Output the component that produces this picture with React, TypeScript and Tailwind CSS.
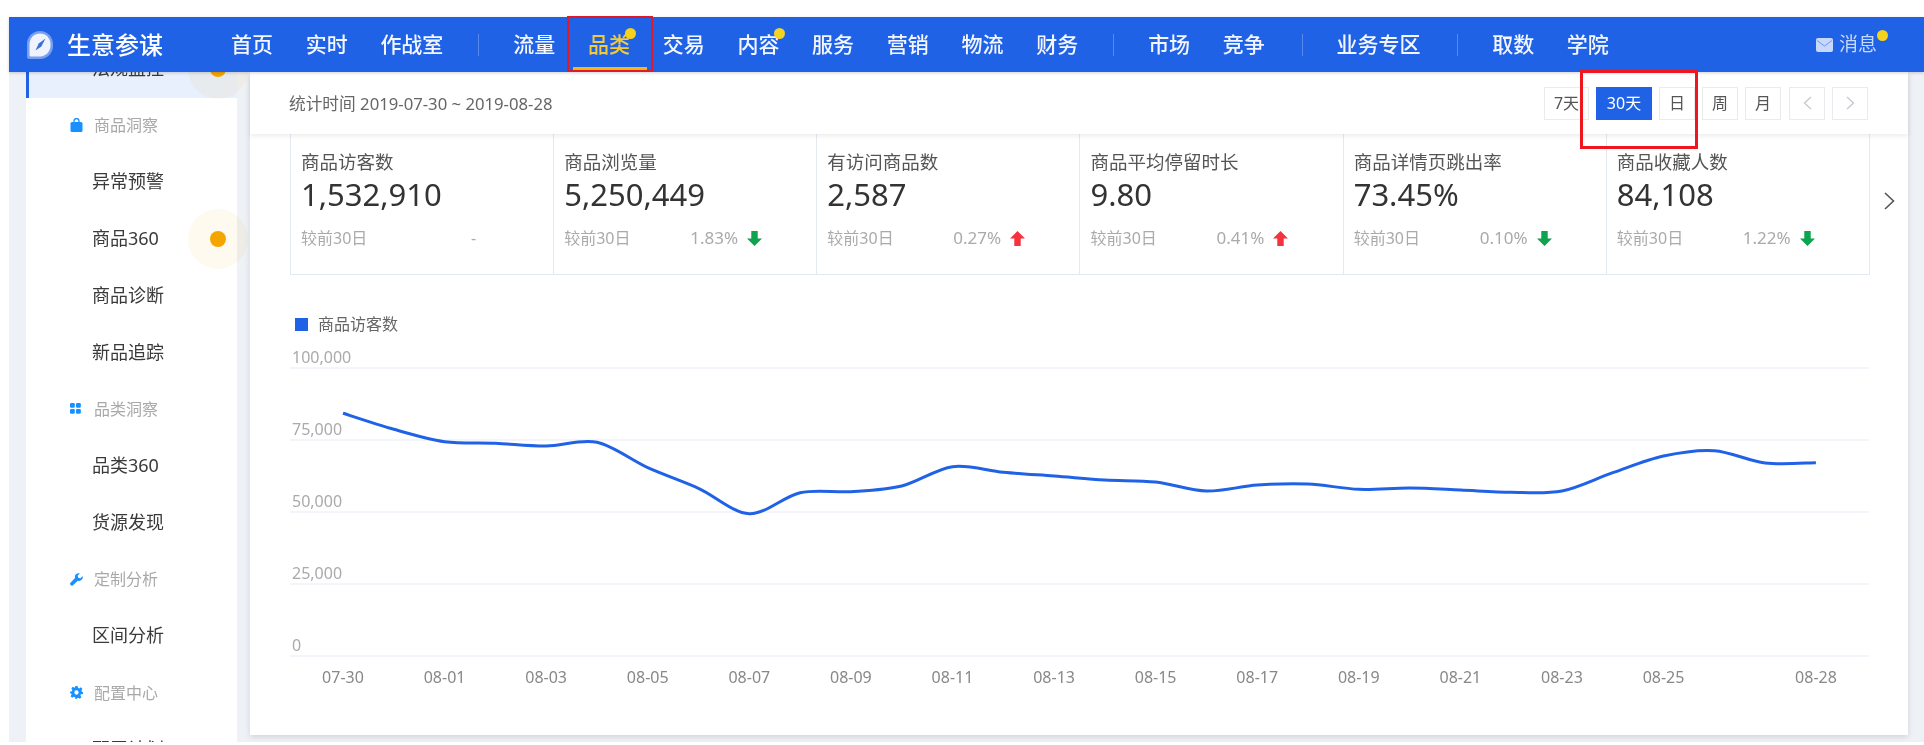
import React from "react";

const FONT = '"Noto Sans","Noto Sans CJK SC",sans-serif';

type NavItem = { t: string; active?: boolean; dot?: boolean } | "sep" | "sepWide";
const NAV: NavItem[] = [
  { t: "首页" }, { t: "实时" }, { t: "作战室" }, "sep",
  { t: "流量" }, { t: "品类", active: true, dot: true }, { t: "交易" }, { t: "内容", dot: true },
  { t: "服务" }, { t: "营销" }, { t: "物流" }, { t: "财务" }, "sep",
  { t: "市场" }, { t: "竞争" }, "sepWide", { t: "业务专区" }, "sepWide", { t: "取数" }, { t: "学院" },
];

function Logo() {
  return (
    <svg width="28" height="30" viewBox="0 0 28 30" className="shrink-0">
      <path d="M14 1C6.800 1 1 6.800 1 14v12.500A2.500 2.500 0 0 0 3.500 29H14c7.200 0 13-5.800 13-13V14C27 6.800 21.200 1 14 1Z" fill="#fff" fillOpacity="0.4" />
      <path d="M14 3.500C8.200 3.500 3.500 8.200 3.500 14v11c0 .8.700 1.500 1.500 1.500h9c5.800 0 10.500-5.200 10.500-11V14C24.500 8.200 19.800 3.500 14 3.500Z" fill="#eef3fd" />
      <path d="M19.500 8.500 15.300 16.500 9.500 20.500 12.700 13.500Z" fill="#3a6fd6" />
    </svg>
  );
}

function Header() {
  return (
    <header className="relative z-30 flex h-[55px] items-center bg-[#2062e6] pl-[17px] shadow-[0_1px_3px_rgba(0,0,0,0.18)]">
      <Logo />
      <span className="ml-[13px] w-[95px] whitespace-nowrap text-[24px] font-medium leading-none text-white">生意参谋</span>
      <nav className="ml-[69px] flex h-full items-center gap-[32.700px]">
        {NAV.map((n, i) =>
          n === "sep" || n === "sepWide" ? (
            <span key={i} className={`h-[22px] w-px bg-white/25 ${n === "sep" ? "ml-[2.300px] mr-[1.300px]" : "ml-[4px] mr-[1.300px]"}`} />
          ) : (
            <span key={i} className={`relative whitespace-nowrap text-[21px] font-medium leading-none ${n.active ? "text-[#f2cb3c]" : "text-[#f3f6fe]"}`}>
              {n.t}
              {n.dot && <span className="absolute -right-[6px] -top-[6px] h-[11px] w-[11px] rounded-full bg-[#f5d21f]" />}
            </span>
          )
        )}
      </nav>
      <div className="relative ml-auto mr-[47px] flex items-center gap-[6px] text-[19px] leading-none text-[#c6d8fb]">
        <svg width="17" height="14" viewBox="0 0 17 14">
          <rect width="17" height="14" rx="2" fill="#c6d8fb" />
          <path d="M1 2.500 8.500 8 16 2.500" fill="none" stroke="#2062e6" strokeWidth="1" opacity="0.55" />
        </svg>
        <span>消息</span>
        <span className="absolute -right-[11px] -top-[5px] h-[11px] w-[11px] rounded-full bg-[#f5d21f]" />
      </div>
      <span className="absolute bottom-[2px] left-[564px] h-[3px] w-[74px] bg-[#f0b90b]" />
      <span className="absolute -top-px bottom-0 left-[558px] w-[86px] border-[2.500px] border-[#e0182a]" />
    </header>
  );
}

function BagIcon() {
  return (
    <svg width="13" height="14" viewBox="0 0 13 14"><path d="M4 4V3a2.500 2.500 0 0 1 5 0v1" fill="none" stroke="#1890ff" strokeWidth="1.300" /><rect x="0.500" y="4" width="12" height="10" rx="1.500" fill="#1890ff" /></svg>
  );
}
function GridIcon() {
  return (
    <svg width="11" height="11" viewBox="0 0 11 11" fill="#1890ff"><rect width="4.800" height="4.800" rx="1.200" /><rect x="6" width="4.800" height="4.800" rx="1.200" /><rect y="6" width="4.800" height="4.800" rx="1.200" /><rect x="6" y="6" width="4.800" height="4.800" rx="1.200" /></svg>
  );
}
function WrenchIcon() {
  return (
    <svg width="13" height="13" viewBox="0 0 13 13" fill="#1890ff"><path d="M12.600 3.200 10.400 5.300 8.200 4.800 7.700 2.600 9.800.400C7.900-.300 5.500.700 5 2.900c-.2.800-.1 1.500.1 2.200L.7 9.500a1.800 1.800 0 0 0 2.600 2.600l4.500-4.400c2.500.8 5.100-1.100 5.100-3.700 0-.3 0-.5-.3-.8Z" /></svg>
  );
}
function GearIcon() {
  return (
    <svg width="13" height="13" viewBox="0 0 24 24" fill="#1890ff"><path fillRule="evenodd" d="M10 0h4l.8 3.400 2.300 1 3-1.900 2.800 2.800-1.800 3 1 2.300L24 11.400v3.200l-3.800.8-1 2.300 1.900 3-2.900 2.800-3-1.800-2.300 1L12 24h-2l-.8-3.300-2.300-1-3 1.800-2.800-2.800 1.800-3-1-2.300L0 13.600v-3.200l3.300-.8 1-2.300-1.800-3L5.300 1.500l3 1.900 1-.9ZM12 8a4 4 0 1 0 0 8 4 4 0 0 0 0-8Z" /></svg>
  );
}

type Row = { kind: "section"; t: string; icon: React.ReactNode } | { kind: "item"; t: string; active?: boolean; dot?: boolean };
const ROWS: Row[] = [
  { kind: "item", t: "法规监控", active: true, dot: true },
  { kind: "section", t: "商品洞察", icon: <BagIcon /> },
  { kind: "item", t: "异常预警" },
  { kind: "item", t: "商品360", dot: true },
  { kind: "item", t: "商品诊断" },
  { kind: "item", t: "新品追踪" },
  { kind: "section", t: "品类洞察", icon: <GridIcon /> },
  { kind: "item", t: "品类360" },
  { kind: "item", t: "货源发现" },
  { kind: "section", t: "定制分析", icon: <WrenchIcon /> },
  { kind: "item", t: "区间分析" },
  { kind: "section", t: "配置中心", icon: <GearIcon /> },
  { kind: "item", t: "配置计划" },
];

function Sidebar() {
  return (
    <aside className="-mt-[31px] w-[211px] shrink-0 bg-white">
      {ROWS.map((r, i) =>
        r.kind === "section" ? (
          <div key={i} className="flex h-[56.750px] items-center pb-[2px] pl-[44px] text-[16px] text-[#a9a9a9]">
            <span className="flex w-[24px] items-center">{r.icon}</span>
            <span>{r.t}</span>
          </div>
        ) : (
          <div key={i} className={`relative flex h-[56.750px] items-center pb-[2px] pl-[66px] text-[18px] text-[#3a3a3a] ${r.active ? "border-l-[3px] border-[#2062e6] bg-[#e8f0fd] !pl-[63px]" : ""}`}>
            {r.t}
            {r.dot && (
              <>
                <span className={`absolute top-[-2px] h-[60px] w-[60px] rounded-full bg-[#f5a500]/[0.06] ${r.active ? "left-[159px]" : "left-[162px]"}`} />
                <span className={`absolute top-[20px] h-[16px] w-[16px] rounded-full bg-[#f5a500] ${r.active ? "left-[181px]" : "left-[184px]"}`} />
              </>
            )}
          </div>
        )
      )}
    </aside>
  );
}

const RANGE = ["7天", "30天", "日", "周", "月"];
function Toolbar() {
  return (
    <div className="relative z-10 flex h-[62px] items-center bg-white pl-[39px] pr-[40px] shadow-[0_2px_5px_rgba(0,0,0,0.08)]">
      <span className="mt-[2px] text-[16.700px] text-[#666]">统计时间 2019-07-30 ~ 2019-08-28</span>
      <div className="ml-auto flex items-center gap-[7px] text-[16px] text-[#555]">
        {RANGE.map((r, i) => (
          <span key={r} className={`flex h-[33px] items-center justify-center border ${i === 0 ? "w-[45px]" : i === 1 ? "w-[56px] border-[#2062e6] bg-[#2062e6] text-white" : "w-[36px]"} ${i === 1 ? "" : "border-[#e9ebee]"}`}>
            {r}
          </span>
        ))}
        <span className="ml-px flex h-[33px] w-[36px] items-center justify-center border border-[#e9ebee]">
          <svg width="9" height="14" viewBox="0 0 9 14" fill="none" stroke="#c4c8cf" strokeWidth="1.300"><path d="M8 1 1.500 7 8 13" /></svg>
        </span>
        <span className="flex h-[33px] w-[36px] items-center justify-center border border-[#e9ebee]">
          <svg width="9" height="14" viewBox="0 0 9 14" fill="none" stroke="#c4c8cf" strokeWidth="1.300"><path d="M1 1l6.500 6L1 13" /></svg>
        </span>
      </div>
    </div>
  );
}

const METRICS = [
  { t: "商品访客数", v: "1,532,910", p: "-", d: null },
  { t: "商品浏览量", v: "5,250,449", p: "1.83%", d: "down" },
  { t: "有访问商品数", v: "2,587", p: "0.27%", d: "up" },
  { t: "商品平均停留时长", v: "9.80", p: "0.41%", d: "up" },
  { t: "商品详情页跳出率", v: "73.45%", p: "0.10%", d: "down" },
  { t: "商品收藏人数", v: "84,108", p: "1.22%", d: "down" },
];

function Arrow({ up }: { up: boolean }) {
  const c = up ? "#f5333f" : "#0ea44f";
  return (
    <svg width="15" height="15" viewBox="0 0 14 14" fill={c}>
      {up ? <path d="M7 0 14 7H10V14H4V7H0Z" /> : <path d="M7 14 0 7H4V0H10V7H14Z" />}
    </svg>
  );
}

function Metrics() {
  return (
    <div className="relative">
      <div className="ml-[40px] grid w-[1580px] grid-cols-6 border-b border-r border-[#e4e9f0]">
        {METRICS.map((m) => (
          <div key={m.t} className="h-[140px] border-l border-[#e4e9f0] pl-[10px] pt-[16px]">
            <div className="text-[18.500px] leading-[24px] text-[#555]">{m.t}</div>
            <div className="text-[31px] leading-[40px] text-[#333]">{m.v}</div>
            <div className="mt-[12px] flex h-[24px] items-center text-[16px] text-[#aaa]">
              <span className="w-[126px] shrink-0">较前30日</span>
              {m.d ? (
                <>
                  <span className="w-[57px] shrink-0 text-[17px]">{m.p}</span>
                  <Arrow up={m.d === "up"} />
                </>
              ) : (
                <span className="ml-[44px]">{m.p}</span>
              )}
            </div>
          </div>
        ))}
      </div>
      <svg width="11" height="18" viewBox="0 0 11 18" fill="none" stroke="#555" strokeWidth="1.600" className="absolute left-[1634px] top-[58px]">
        <path d="M1 1l8.500 8L1 17" />
      </svg>
    </div>
  );
}

const ZY = [340, 388, 425, 430, 438, 427, 503, 565, 641, 578, 575, 558, 500, 517, 528, 540, 546, 573, 555, 552, 568, 564, 570, 577, 573, 518, 468, 452, 489, 488];
const PTS = ZY.map((y, i) => [343 + i * 50.79, 300 + y / 3]);

function smooth(pts: number[][]) {
  let d = `M${pts[0][0]} ${pts[0][1].toFixed(1)}`;
  for (let i = 0; i < pts.length - 1; i++) {
    const p0 = pts[Math.max(0, i - 1)];
    const p1 = pts[i];
    const p2 = pts[i + 1];
    const p3 = pts[Math.min(pts.length - 1, i + 2)];
    const t = 0.16;
    d += ` C${(p1[0] + (p2[0] - p0[0]) * t).toFixed(1)} ${(p1[1] + (p2[1] - p0[1]) * t).toFixed(1)} ${(p2[0] - (p3[0] - p1[0]) * t).toFixed(1)} ${(p2[1] - (p3[1] - p1[1]) * t).toFixed(1)} ${p2[0].toFixed(1)} ${p2[1].toFixed(1)}`;
  }
  return d;
}

const YL = [["100,000", 368], ["75,000", 440], ["50,000", 512], ["25,000", 584], ["0", 656]] as const;
const XL = ["07-30", "08-01", "08-03", "08-05", "08-07", "08-09", "08-11", "08-13", "08-15", "08-17", "08-19", "08-21", "08-23", "08-25"];

function Chart() {
  return (
    <svg width="1658" height="370" viewBox="250 337 1658 370" className="block" fontFamily={FONT} fontSize="16">
      {YL.map(([l, y]) => (
        <g key={l}>
          <line x1="290" x2="1869" y1={y} y2={y} stroke="#f2f5fa" strokeWidth="2" />
          <text x="292" y={y - 5} fill="#aaa">{l}</text>
        </g>
      ))}
      {XL.map((l, i) => (
        <text key={l} x={343 + i * 101.58} y="683" textAnchor="middle" fill="#888">{l}</text>
      ))}
      <text x="1816" y="683" textAnchor="middle" fill="#888">08-28</text>
      <path d={smooth(PTS)} fill="none" stroke="#2062e6" strokeWidth="3" />
    </svg>
  );
}

export default function App() {
  return (
    <div className="relative h-[745px] w-[1924px] overflow-hidden bg-white pl-[9px] pt-[17px] blur-[0.5px]" style={{ fontFamily: FONT }}>
      <Header />
      <div className="flex h-[670px] overflow-hidden bg-[#eef1f6] pl-[17px]">
        <Sidebar />
        <main className="relative ml-[13px] h-[663px] w-[1658px] shrink-0 bg-white shadow-[0_2px_6px_rgba(0,0,0,0.12)]">
          <Toolbar />
          <Metrics />
          <div className="ml-[45px] mt-[38px] flex h-[24px] items-center gap-[10px] pb-[2px] text-[16px] text-[#666]">
            <span className="h-[13px] w-[13px] bg-[#2062e6]" />
            商品访客数
          </div>
          <Chart />
        </main>
      </div>
      <span className="absolute left-[1580px] top-[70px] z-40 h-[79px] w-[118px] border-[3px] border-[#f0161f]" />
    </div>
  );
}
